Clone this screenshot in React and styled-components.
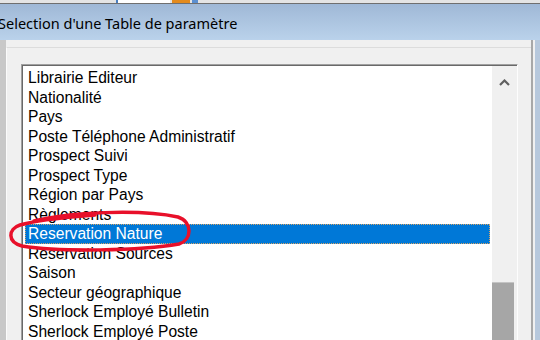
import React from "react";
import styled, { createGlobalStyle } from "styled-components";

const GlobalStyle = createGlobalStyle`
  html, body {
    margin: 0;
    padding: 0;
    width: 540px;
    height: 340px;
    overflow: hidden;
    background: #f0f0f0;
  }
`;

const Screen = styled.div`
  position: relative;
  width: 540px;
  height: 340px;
  display: flex;
  flex-direction: column;
  overflow: hidden;
`;

const TopStrip = styled.div`
  height: 3px;
  background: #e4e4e4;
  border-bottom: 1px solid #6f6f6f;
  display: flex;
  align-items: flex-end;
  padding-left: 116px;
  gap: 2px;
`;

const StripIcon = styled.span`
  display: block;
  width: ${(p) => p.w}px;
  height: 3px;
  background: ${(p) => p.color};
  border-left: ${(p) => (p.edge ? `2px solid ${p.edge}` : "none")};
`;

const TitleBar = styled.div`
  height: 36px;
  background: linear-gradient(#9fb8d6, #bad2eb);
  display: flex;
  align-items: center;
`;

const Title = styled.h1`
  margin: 1px 0 0 -2px;
  font-family: "Noto Sans", "DejaVu Sans", sans-serif;
  font-size: 14.5px;
  font-weight: 400;
  color: #000;
`;

const Body = styled.div`
  flex: 1;
  display: flex;
  min-height: 0;
`;

const LeftEdge = styled.div`
  width: 6px;
  background: #c8c8c8;
`;

const Dialog = styled.div`
  flex: 1;
  background: #f0f0f0;
  padding-top: 7px;
  display: flex;
  min-height: 0;
`;

const Panel = styled.div`
  flex: 1;
  border-top: 1px solid #dcdcdc;
  border-left: 1px solid #fbfbfb;
  padding: 16px 13px 0 14px;
  display: flex;
  min-height: 0;
`;

const RightEdge = styled.div`
  display: flex;
`;

const EdgeLine = styled.div`
  width: ${(p) => p.w}px;
  background: ${(p) => p.color};
`;

const ListBox = styled.div`
  flex: 1;
  display: flex;
  background: #fff;
  border-top: 1px solid #a0a0a0;
  border-left: 1px solid #a0a0a0;
  border-right: 1px solid #fdfdfd;
  box-shadow: inset 1px 1px 0 #696969;
  padding: 1px 0 0 1px;
  min-height: 0;
  overflow: hidden;
`;

const Items = styled.ul`
  flex: 1;
  list-style: none;
  margin: 0;
  padding: 2px 2px 0 2px;
`;

const Item = styled.li`
  box-sizing: border-box;
  height: 19.5px;
  line-height: 17.5px;
  padding-left: 2px;
  font-family: "Liberation Sans", Arial, sans-serif;
  font-size: 15.6px;
  white-space: nowrap;
  color: ${(p) => (p.selected ? "#fff" : "#000")};
  background: ${(p) => (p.selected ? "#0078d7" : "transparent")};
  border: 1px dotted ${(p) => (p.selected ? "#d8a466" : "transparent")};
`;

const Scrollbar = styled.div`
  width: 25px;
  background: #f0f0f0;
  display: flex;
  flex-direction: column;
`;

const ArrowButton = styled.div`
  height: 32px;
  display: flex;
  align-items: center;
  justify-content: center;
`;

const Track = styled.div`
  flex: 1;
  display: flex;
  flex-direction: column;
`;

const Thumb = styled.div`
  width: 22px;
  flex: 1;
  background: #a6a6a6;
  border-top: 1px solid #c4c4c4;
`;

const Annotation = styled.svg`
  position: absolute;
  left: 0;
  top: 0;
  pointer-events: none;
`;

const entries = [
  "Librairie Editeur",
  "Nationalité",
  "Pays",
  "Poste Téléphone Administratif",
  "Prospect Suivi",
  "Prospect Type",
  "Région par Pays",
  "Règlements",
  "Reservation Nature",
  "Reservation Sources",
  "Saison",
  "Secteur géographique",
  "Sherlock Employé Bulletin",
  "Sherlock Employé Poste",
  "Sherlock Employé Statut",
];

const selected = "Reservation Nature";
const thumbOffset = 184;

const App = () => {
  return (
    <Screen>
      <GlobalStyle />
      <TopStrip>
        <StripIcon w={52} color="#ffffff" edge="#4a7fc0" />
        <StripIcon w={18} color="#e38a1c" />
        <StripIcon w={6} color="#5b8fd0" />
      </TopStrip>
      <TitleBar>
        <Title>Selection d'une Table de paramètre</Title>
      </TitleBar>
      <Body>
        <LeftEdge />
        <Dialog>
          <Panel>
            <ListBox>
              <Items>
                {entries.map((e) => (
                  <Item key={e} selected={e === selected}>
                    {e}
                  </Item>
                ))}
              </Items>
              <Scrollbar>
                <ArrowButton>
                  <svg width="11" height="7" viewBox="0 0 11 7">
                    <polyline
                      points="1,6 5.5,1.5 10,6"
                      fill="none"
                      stroke="#606060"
                      strokeWidth="2.2"
                    />
                  </svg>
                </ArrowButton>
                <Track>
                  <div style={{ height: thumbOffset }} />
                  <Thumb />
                </Track>
              </Scrollbar>
            </ListBox>
          </Panel>
        </Dialog>
        <RightEdge>
          <EdgeLine w={2} color="#a8a8a8" />
          <EdgeLine w={2} color="#f0f0f0" />
          <EdgeLine w={5} color="#b7c8dc" />
        </RightEdge>
      </Body>
      <Annotation width="540" height="340" viewBox="0 0 540 340">
        <path
          d="M 34 221 C 70 212, 140 209, 178 217 C 193 222, 192 240, 179 244 C 140 251, 60 252, 22 246 C 7 242, 8 229, 20 225 C 40 219, 70 217, 95 215"
          fill="none"
          stroke="#e8102a"
          strokeWidth="3.5"
          strokeLinecap="round"
        />
      </Annotation>
    </Screen>
  );
};

export default App;
